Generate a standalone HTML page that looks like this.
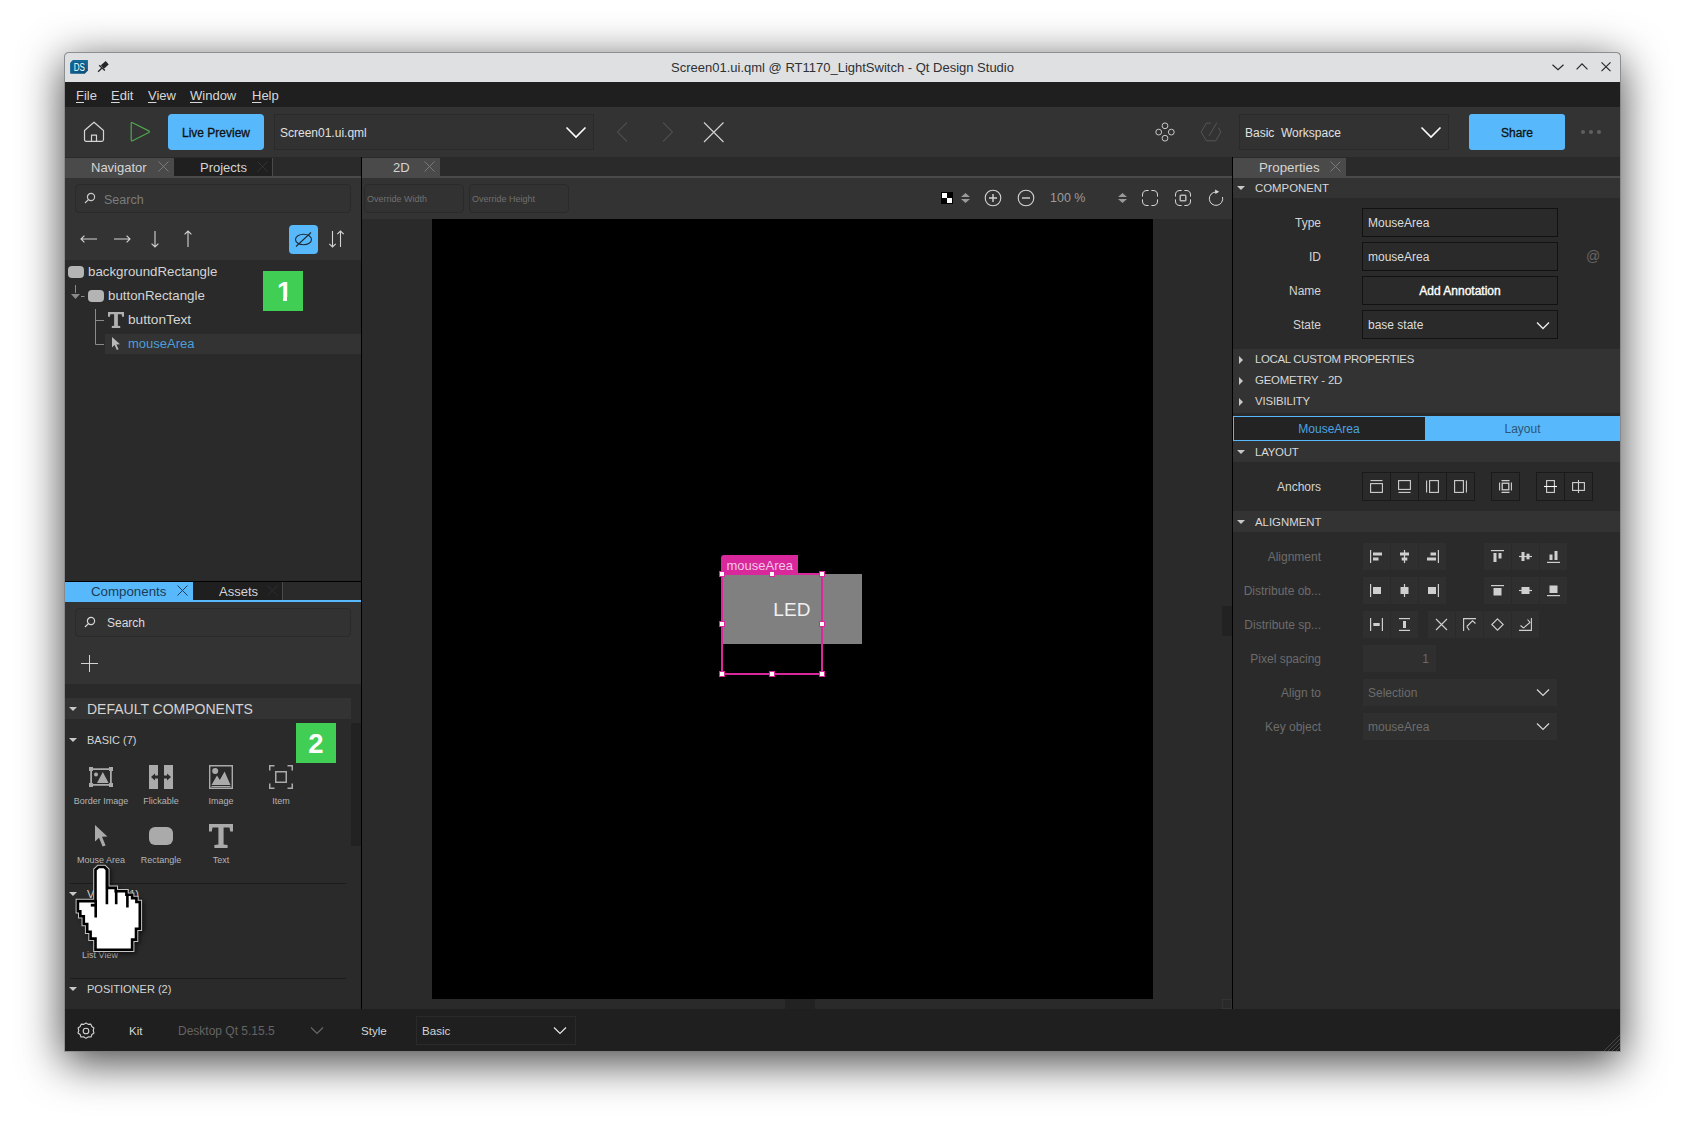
<!DOCTYPE html>
<html><head><meta charset="utf-8"><title>Qt Design Studio</title>
<style>
*{box-sizing:border-box;margin:0;padding:0}
html,body{width:1685px;height:1128px;overflow:hidden;background:#fff}
body{font-family:"Liberation Sans",sans-serif;font-size:13px;color:#d4d4d4;position:relative}
.a{position:absolute}
.t{position:absolute;white-space:pre;line-height:16px}
#win{left:65px;top:53px;width:1555px;height:998px;background:#2a2a2a;box-shadow:0 0 0 1px rgba(120,120,120,.55),0 10px 44px 2px rgba(0,0,0,.72);border-radius:4px 4px 0 0}
svg{position:absolute;overflow:visible}
.ic{fill:none;stroke:#d4d4d4;stroke-width:1.2;stroke-linecap:round;stroke-linejoin:round}
.mn{top:88px;font-size:13px;color:#d8d8d8}
.mn u{text-decoration-thickness:1px;text-underline-offset:2px}
.ri{width:16px;height:12px;border-radius:4px;background:#b4b4b4}
.tri{width:0;height:0;border-left:4px solid transparent;border-right:4px solid transparent;border-top:4px solid #c8c8c8}
.cl{width:60px;text-align:center;font-size:9px;line-height:12px;color:#b4b4b4}
.ob{height:29px;border:1px solid #2a2a2a;border-radius:4px;background:#323232}
.hd{width:6px;height:6px;background:#fff;border:1px solid #d8289c}
.trr{width:0;height:0;border-top:4px solid transparent;border-bottom:4px solid transparent;border-left:4px solid #c8c8c8}
.sh{font-size:11.4px;color:#d8d8d8}
.fb{height:29px;border:1px solid #121212;background:#2a2a2a}
.ab{height:29px;border:1px solid #1a1a1a}
.db{width:27px;height:27px;background:#2f2f2f}
</style></head><body>
<div id="win" class="a"></div>
<!-- title bar -->
<div class="a" style="left:64px;top:52px;width:1557px;height:30px;background:#dfe0e2;border-radius:5px 5px 0 0;border:1px solid #8b8f92;border-bottom:none"></div>
<div class="t" style="left:65px;width:1555px;top:60px;text-align:center;color:#2e3134;font-size:13px">Screen01.ui.qml @ RT1170_LightSwitch - Qt Design Studio</div>
<!-- menubar -->
<div class="a" style="left:65px;top:82px;width:1555px;height:25px;background:#1f1f1f"></div>
<!-- toolbar -->
<div class="a" style="left:65px;top:107px;width:1555px;height:50px;background:#333"></div>
<!-- tab strip -->
<div class="a" style="left:65px;top:157px;width:1555px;height:20px;background:#2a2a2a"></div>
<!-- status bar -->
<div class="a" style="left:65px;top:1009px;width:1555px;height:42px;background:#1f1f1f"></div>

<!-- title icons -->
<svg style="left:70px;top:60px" width="18" height="14" viewBox="0 0 18 14"><defs><linearGradient id="dsg" x1="0" y1="0" x2="1" y2="1"><stop offset="0" stop-color="#0f6494"/><stop offset=".5" stop-color="#0e5f8e"/><stop offset="1" stop-color="#084a73"/></linearGradient></defs><path d="M3 0 H17.2 Q17.9 0 17.9 .7 V10.6 L14.8 13.7 H.8 Q.1 13.7 .1 13 V2.9 Z" fill="url(#dsg)"/><path d="M3 0 H17.2 Q17.9 0 17.9 .7 V10.6 L16 8 V2 H.9 Z" fill="#1b70a0" opacity=".55"/><text x="3.7" y="10.6" font-family="Liberation Sans,sans-serif" font-size="10" fill="#fff" textLength="11.2" lengthAdjust="spacingAndGlyphs">DS</text></svg>
<svg style="left:97px;top:60px" width="13" height="13" viewBox="0 0 13 13" fill="none" stroke="#232629"><path d="M5.4 6.9 L10.2 2.8" stroke-width="4.6"/><path d="M2.2 5.3 L7.9 10.6" stroke-width="1.3"/><path d="M4.7 8.2 L1.1 11.7" stroke-width="1.3"/></svg>
<!-- window controls -->
<svg style="left:1551px;top:61px" width="62" height="12" viewBox="0 0 62 12" fill="none" stroke="#232629" stroke-width="1.15"><path d="M1.5 3.8 L7 8.8 L12.5 3.8"/><path d="M25.6 8.3 L31 2.8 L36.5 8.3"/><path d="M50.5 1.4 L59.5 10.2 M59.5 1.4 L50.5 10.2"/></svg>
<!-- menu -->
<div class="t mn" style="left:76px"><u>F</u>ile</div>
<div class="t mn" style="left:111px"><u>E</u>dit</div>
<div class="t mn" style="left:148px"><u>V</u>iew</div>
<div class="t mn" style="left:190px"><u>W</u>indow</div>
<div class="t mn" style="left:252px"><u>H</u>elp</div>
<!-- toolbar left -->
<svg style="left:83px;top:121px" width="22" height="22" viewBox="0 0 22 22" class="ic"><path d="M1.5 9.5 L11 1.2 L20.5 9.5 L20.5 18.5 Q20.5 20.3 18.7 20.3 L3.3 20.3 Q1.5 20.3 1.5 18.5 Z"/><path d="M8.5 20 L8.5 14.2 L13.5 14.2 L13.5 20"/></svg>
<svg style="left:129px;top:121px" width="22" height="22" viewBox="0 0 22 22" fill="none" stroke="#4fa64f" stroke-width="1.2" stroke-linejoin="round"><path d="M2.2 2.6 Q2.2 1 3.6 1.7 L19.8 9.9 Q21 10.7 19.8 11.5 L3.6 19.7 Q2.2 20.4 2.2 18.8 Z"/></svg>
<div class="a" style="left:168px;top:114px;width:96px;height:36px;background:#57b9fc;border-radius:4px"></div>
<div class="t" style="left:168px;width:96px;top:125px;text-align:center;color:#111;font-size:12px;-webkit-text-stroke:.3px #111">Live Preview</div>
<div class="a" style="left:274px;top:114px;width:320px;height:36px;border:1px solid #2a2a2a;background:#323232"></div>
<div class="t" style="left:280px;top:125px;font-size:12px;color:#e0e0e0">Screen01.ui.qml</div>
<svg style="left:565px;top:126px" width="22" height="13" viewBox="0 0 22 13" fill="none" stroke="#fff" stroke-width="1.6"><path d="M1.5 1.5 L11 11 L20.5 1.5"/></svg>
<svg style="left:615px;top:121px" width="112" height="22" viewBox="0 0 112 22" fill="none" stroke-width="1.1"><path d="M12 1.5 L2.5 11 L12 20.5" stroke="#4d4d4d"/><path d="M48 1.5 L57.5 11 L48 20.5" stroke="#4d4d4d"/><path d="M89 1.5 L108.5 21 M108.5 1.5 L89 21" stroke="#d4d4d4"/></svg>
<!-- toolbar right -->
<svg style="left:1155px;top:122px" width="20" height="20" viewBox="0 0 20 20" fill="none" stroke="#c8c8c8" stroke-width="1"><circle cx="10" cy="3.8" r="2.9"/><circle cx="10" cy="16.2" r="2.9"/><circle cx="3.7" cy="10.1" r="2.9"/><circle cx="16.3" cy="10.1" r="2.9"/></svg>
<svg style="left:1200px;top:122px" width="22" height="20" viewBox="0 0 22 20" fill="none" stroke="#565656" stroke-width="1" stroke-linejoin="round"><path d="M11 1.1 H6.4 L1.1 10.1 L6.4 18.8 H15.8 L20.8 10.1 L18.4 5.8"/><path d="M16.9 .6 L9 13.8"/></svg>
<div class="a" style="left:1239px;top:114px;width:210px;height:36px;border:1px solid #2a2a2a;background:#323232"></div>
<div class="t" style="left:1245px;top:124.5px;font-size:12px;color:#e0e0e0">Basic  Workspace</div>
<svg style="left:1420px;top:126px" width="22" height="13" viewBox="0 0 22 13" fill="none" stroke="#fff" stroke-width="1.6"><path d="M1.5 1.5 L11 11 L20.5 1.5"/></svg>
<div class="a" style="left:1469px;top:114px;width:96px;height:36px;background:#57b9fc;border-radius:3px"></div>
<div class="t" style="left:1469px;width:96px;top:124.5px;text-align:center;color:#111;font-size:12px;-webkit-text-stroke:.3px #111">Share</div>
<div class="a" style="left:1581px;top:130px;width:4px;height:4px;border-radius:2px;background:#606060"></div>
<div class="a" style="left:1589px;top:130px;width:4px;height:4px;border-radius:2px;background:#606060"></div>
<div class="a" style="left:1597px;top:130px;width:4px;height:4px;border-radius:2px;background:#606060"></div>

<!-- LEFT PANEL: navigator -->
<div class="a" style="left:65px;top:158px;width:109px;height:19px;background:#4a4a4a"></div>
<div class="a" style="left:174px;top:158px;width:99px;height:19px;background:#1f1f1f;border-right:1px solid #4a4a4a"></div>
<div class="a" style="left:65px;top:176px;width:296px;height:2px;background:#4a4a4a"></div>
<div class="t" style="left:91px;top:160px">Navigator</div>
<div class="t" style="left:200px;top:160px">Projects</div>
<svg style="left:158px;top:161px" width="11" height="11" viewBox="0 0 11 11" fill="none" stroke="#7a7a7a" stroke-width="1"><path d="M.5 .5 L10.5 10.5 M10.5 .5 L.5 10.5"/></svg>
<svg style="left:257px;top:161px" width="11" height="11" viewBox="0 0 11 11" fill="none" stroke="#333" stroke-width="1"><path d="M.5 .5 L10.5 10.5 M10.5 .5 L.5 10.5"/></svg>
<div class="a" style="left:65px;top:178px;width:296px;height:82px;background:#333"></div>
<div class="a" style="left:75px;top:184px;width:276px;height:28.5px;border:1px solid #2a2a2a;border-radius:4px;background:#323232"></div>
<svg style="left:84px;top:192px" width="12" height="12" viewBox="0 0 12 12" fill="none" stroke="#c8c8c8" stroke-width="1.2"><circle cx="7" cy="5" r="3.6"/><path d="M4.4 7.6 L1 11"/></svg>
<div class="t" style="left:104px;top:192px;font-size:12.5px;color:#7c7c7c">Search</div>
<svg style="left:80px;top:230px" width="110" height="18" viewBox="0 0 110 18" fill="none" stroke="#d4d4d4" stroke-width="1.1"><path d="M17 9 L1 9 M4.4 5.6 L1 9 L4.4 12.4"/><path d="M34 9 L50 9 M46.6 5.6 L50 9 L46.6 12.4"/><path d="M75 1 L75 17 M71.6 13.6 L75 17 L78.4 13.6"/><path d="M108 17 L108 1 M104.6 4.4 L108 1 L111.4 4.4"/></svg>
<div class="a" style="left:289px;top:225px;width:29px;height:29px;background:#57b9fc;border-radius:4px"></div>
<svg style="left:294px;top:230px" width="19" height="19" viewBox="0 0 19 19" fill="none" stroke="#1f2a33" stroke-width="1.1"><ellipse cx="9.5" cy="9.5" rx="8" ry="5.2"/><path d="M2 16.5 L17 2.5"/></svg>
<svg style="left:328px;top:230px" width="17" height="18" viewBox="0 0 17 18" fill="none" stroke="#d4d4d4" stroke-width="1.1"><path d="M4.5 1 L4.5 17 M1.3 13.8 L4.5 17 L7.7 13.8"/><path d="M12.5 17 L12.5 1 M9.3 4.2 L12.5 1 L15.7 4.2"/></svg>
<!-- tree -->
<div class="a" style="left:105px;top:334px;width:256px;height:20px;background:#333"></div>
<div class="a ri" style="left:68px;top:266px"></div>
<div class="a ri" style="left:88px;top:290px"></div>
<div class="t" style="left:88px;top:264px;font-size:13.3px">backgroundRectangle</div>
<div class="t" style="left:108px;top:288px;font-size:13.3px">buttonRectangle</div>
<div class="t" style="left:128px;top:312px;font-size:13.7px">buttonText</div>
<div class="t" style="left:128px;top:336px;color:#4b9fd8">mouseArea</div>
<svg style="left:70px;top:284.6px" width="40" height="68" viewBox="0 0 40 68" fill="none" stroke="#8a8a8a" stroke-width="1"><path d="M5.5 0 L5.5 8" /><path d="M1 9 L10 9 L5.5 14 Z" fill="#8a8a8a" stroke="none"/><path d="M11 11.5 L14.5 11.5"/><path d="M25.5 24 L25.5 59.5 L34 59.5 M25.5 35.5 L34 35.5"/></svg>
<svg style="left:108px;top:312px" width="16" height="16" viewBox="0 0 17 17"><path d="M0 0 H17 V5 H15 L14.5 2.5 H10.5 V14.5 L13 15 V17 H4 V15 L6.5 14.5 V2.5 H2.5 L2 5 H0 Z" fill="#b0b0b0"/></svg>
<svg style="left:111px;top:336px" width="10" height="15" viewBox="0 0 10 15"><path d="M1 1 L1 11.5 L3.6 9 L5.8 14 L7.6 13.2 L5.4 8.4 L9 8.2 Z" fill="#b8b8b8"/></svg>
<div class="a" style="left:263px;top:271px;width:40px;height:40px;background:#41ce54"></div>
<div class="t" style="left:264.5px;width:40px;top:276.1px;line-height:32px;text-align:center;font-size:27px;font-weight:700;color:#fff">1</div>
<div class="a" style="left:275px;top:297.2px;width:8px;height:6px;background:#41ce54"></div><div class="a" style="left:287.3px;top:297.2px;width:7px;height:6px;background:#41ce54"></div>
<!-- divider between nav and components -->
<div class="a" style="left:65px;top:581px;width:296px;height:1px;background:#000"></div>
<!-- components tabs -->
<div class="a" style="left:65px;top:582px;width:128px;height:18px;background:#57b9fc"></div>
<div class="a" style="left:193px;top:582px;width:90px;height:18px;background:#1f1f1f;border-right:1px solid #4a4a4a"></div>
<div class="a" style="left:65px;top:600px;width:296px;height:2px;background:#57b9fc"></div>
<div class="t" style="left:91px;top:584px;font-size:13.3px;color:#1d3b55">Components</div>
<div class="t" style="left:219px;top:584px">Assets</div>
<svg style="left:177px;top:585px" width="11" height="11" viewBox="0 0 11 11" fill="none" stroke="#1d3b55" stroke-width="1"><path d="M.5 .5 L10.5 10.5 M10.5 .5 L.5 10.5"/></svg>
<svg style="left:267px;top:585px" width="11" height="11" viewBox="0 0 11 11" fill="none" stroke="#2c2c2c" stroke-width="1"><path d="M.5 .5 L10.5 10.5 M10.5 .5 L.5 10.5"/></svg>
<div class="a" style="left:65px;top:602px;width:296px;height:82px;background:#333"></div>
<div class="a" style="left:75px;top:608px;width:276px;height:28.5px;border:1px solid #2a2a2a;border-radius:4px;background:#323232"></div>
<svg style="left:84px;top:616px" width="12" height="12" viewBox="0 0 12 12" fill="none" stroke="#d8d8d8" stroke-width="1.2"><circle cx="7" cy="5" r="3.6"/><path d="M4.4 7.6 L1 11"/></svg>
<div class="t" style="left:107px;top:615px;font-size:12px;color:#dcdcdc">Search</div>
<svg style="left:81px;top:655px" width="17" height="17" viewBox="0 0 17 17" fill="none" stroke="#d4d4d4" stroke-width="1"><path d="M8.5 0 L8.5 17 M0 8.5 L17 8.5"/></svg>
<div class="a" style="left:65px;top:698px;width:286px;height:21px;background:#333"></div>
<div class="a" style="left:351px;top:723px;width:10px;height:123px;background:#222"></div>
<div class="a tri" style="left:69px;top:706.7px"></div>
<div class="t" style="left:87px;top:700px;font-size:14px;line-height:18px">DEFAULT COMPONENTS</div>
<div class="a tri" style="left:69px;top:737.7px"></div>
<div class="t" style="left:87px;top:732px;font-size:11px">BASIC (7)</div>
<div class="a" style="left:296px;top:723px;width:40px;height:40px;background:#41ce54"></div>
<div class="t" style="left:296px;width:40px;top:727.5px;line-height:32px;text-align:center;font-size:27.5px;font-weight:700;color:#fff">2</div>

<!-- component icons row 1 -->
<svg style="left:89px;top:767px" width="24" height="20" viewBox="0 0 24 20"><g fill="#aaa"><rect x="0" y="0" width="4" height="4"/><rect x="20" y="0" width="4" height="4"/><rect x="0" y="16" width="4" height="4"/><rect x="20" y="16" width="4" height="4"/><path d="M1.2 1.2 H22.8 V18.8 H1.2 Z M3 3 V17 H21 V3 Z" fill-rule="evenodd"/><circle cx="7" cy="7.5" r="2"/><path d="M8 16 L13.8 5 L19.6 16 Z"/></g></svg>
<svg style="left:149px;top:765px" width="24" height="24" viewBox="0 0 24 24"><g fill="#aaa"><path d="M0 0 H9 V24 H0 Z M9 10.6 H6 V8.6 L2 12 L6 15.4 V13.4 H9 Z" fill-rule="evenodd"/><path d="M15 0 H24 V24 H15 Z M15 10.6 H18 V8.6 L22 12 L18 15.4 V13.4 H15 Z" fill-rule="evenodd"/></g></svg>
<svg style="left:209px;top:765px" width="24" height="24" viewBox="0 0 24 24"><g fill="#aaa"><path d="M0 0 H24 V24 H0 Z M1.4 1.4 V22.6 H22.6 V1.4 Z" fill-rule="evenodd"/><circle cx="6.2" cy="6" r="3"/><path d="M2.5 20 L8 10.5 L10.8 15 L15.6 6.5 L21.5 20 Z"/><rect x="2.5" y="21" width="19" height="1"/></g></svg>
<svg style="left:269px;top:765px" width="24" height="24" viewBox="0 0 24 24" fill="none" stroke="#aaa" stroke-width="1.5"><path d="M.75 5.5 V.75 H5.5 M18.5 .75 H23.25 V5.5 M23.25 18.5 V23.25 H18.5 M5.5 23.25 H.75 V18.5"/><rect x="6.75" y="6.75" width="10.5" height="10.5"/></svg>
<div class="t cl" style="left:71px;top:795px">Border Image</div>
<div class="t cl" style="left:131px;top:795px">Flickable</div>
<div class="t cl" style="left:191px;top:795px">Image</div>
<div class="t cl" style="left:251px;top:795px">Item</div>
<!-- row 2 -->
<svg style="left:94px;top:824px" width="14" height="24" viewBox="0 0 14 24"><path d="M1 1 L1 17.6 L5 13.8 L8.6 22.6 L11.6 21.4 L8 12.8 L13.4 12.4 Z" fill="#aaa"/></svg>
<div class="a" style="left:149px;top:827px;width:24px;height:18px;border-radius:6px;background:#aaa"></div>
<svg style="left:209px;top:824px" width="24" height="24" viewBox="0 0 24 24"><path d="M0 0 H24 V7.5 H21.2 L20.5 3.5 H14.6 V20.4 L18.6 21 V24 H5.4 V21 L9.4 20.4 V3.5 H3.5 L2.8 7.5 H0 Z" fill="#aaa"/></svg>
<div class="t cl" style="left:71px;top:854px">Mouse Area</div>
<div class="t cl" style="left:131px;top:854px">Rectangle</div>
<div class="t cl" style="left:191px;top:854px">Text</div>

<div class="a" style="left:70px;top:883px;width:276px;height:1px;background:#1c1c1c"></div>
<div class="a tri" style="left:69px;top:891.7px"></div>
<div class="t" style="left:87px;top:886px;font-size:11px">VIEWS (1)</div>
<div class="t cl" style="left:70px;top:949px">List View</div>
<div class="a" style="left:70px;top:978px;width:276px;height:1px;background:#1c1c1c"></div>
<div class="a tri" style="left:69px;top:986.7px"></div>
<div class="t" style="left:87px;top:981px;font-size:11px">POSITIONER (2)</div>
<!-- vertical divider -->
<div class="a" style="left:361px;top:157px;width:1px;height:852px;background:#000"></div>
<!-- status bar -->
<svg style="left:77px;top:1022px" width="18" height="18" viewBox="0 0 18 18" fill="none" stroke="#d4d4d4" stroke-width="1.1" stroke-linejoin="round"><circle cx="9" cy="9" r="2.8"/><path d="M9 1 L11.2 2.4 L13.8 2.1 L14.8 4.5 L16.9 6 L16.2 8.5 L17 11 L14.9 12.5 L14 15 L11.4 14.8 L9 16.4 L6.6 14.8 L4 15 L3.1 12.5 L1 11 L1.8 8.5 L1.1 6 L3.2 4.5 L4.2 2.1 L6.8 2.4 Z"/></svg>
<div class="t" style="left:129px;top:1023px;font-size:11.6px">Kit</div>
<div class="t" style="left:178px;top:1023px;font-size:12px;color:#646464">Desktop Qt 5.15.5</div>
<svg style="left:310px;top:1026px" width="14" height="9" viewBox="0 0 14 9" fill="none" stroke="#6a6a6a" stroke-width="1.1"><path d="M1 1.5 L7 7.5 L13 1.5"/></svg>
<div class="t" style="left:361px;top:1023px;font-size:11.6px">Style</div>
<div class="a" style="left:416px;top:1016px;width:160px;height:29px;border:1px solid #2a2a2a;background:#1f1f1f"></div>
<div class="t" style="left:422px;top:1023px;font-size:11.6px">Basic</div>
<svg style="left:553px;top:1026px" width="14" height="9" viewBox="0 0 14 9" fill="none" stroke="#e8e8e8" stroke-width="1.2"><path d="M1 1.5 L7 7.5 L13 1.5"/></svg>


<!-- CENTER -->
<div class="a" style="left:362px;top:158px;width:78px;height:19px;background:#4a4a4a"></div>
<div class="a" style="left:362px;top:176px;width:870px;height:2px;background:#4a4a4a"></div>
<div class="t" style="left:393px;top:160px">2D</div>
<svg style="left:424px;top:161px" width="11" height="11" viewBox="0 0 11 11" fill="none" stroke="#7a7a7a" stroke-width="1"><path d="M.5 .5 L10.5 10.5 M10.5 .5 L.5 10.5"/></svg>
<div class="a" style="left:362px;top:178px;width:870px;height:41px;background:#333"></div>
<div class="a ob" style="left:364px;top:184px;width:100px"></div>
<div class="a ob" style="left:469px;top:184px;width:100px"></div>
<div class="t" style="left:367px;top:191px;font-size:9px;color:#707070">Override Width</div>
<div class="t" style="left:472px;top:191px;font-size:9px;color:#707070">Override Height</div>
<div class="a" style="left:941px;top:192px;width:12px;height:12px;background:#000"></div>
<div class="a" style="left:942px;top:193px;width:5px;height:5px;background:#fff"></div>
<div class="a" style="left:947px;top:198px;width:5px;height:5px;background:#fff"></div>
<svg style="left:961px;top:193px" width="9" height="10" viewBox="0 0 9 10" fill="#9a9a9a"><path d="M0 4 L4.5 0 L9 4 Z M0 6 L9 6 L4.5 10 Z"/></svg>
<svg style="left:1118px;top:193px" width="9" height="10" viewBox="0 0 9 10" fill="#9a9a9a"><path d="M0 4 L4.5 0 L9 4 Z M0 6 L9 6 L4.5 10 Z"/></svg>
<svg style="left:984px;top:189px" width="18" height="18" viewBox="0 0 18 18" fill="none" stroke="#d4d4d4" stroke-width="1.1"><circle cx="9" cy="9" r="7.8"/><path d="M5 9 H13 M9 5 V13" stroke-width="1.4"/></svg>
<svg style="left:1017px;top:189px" width="18" height="18" viewBox="0 0 18 18" fill="none" stroke="#d4d4d4" stroke-width="1.1"><circle cx="9" cy="9" r="7.8"/><path d="M5 9 H13" stroke-width="1.4"/></svg>
<div class="t" style="left:1050px;top:190px;font-size:12.5px;color:#9c9c9c">100 %</div>
<svg style="left:1142px;top:190px" width="16" height="16" viewBox="0 0 16 16" fill="none" stroke="#d8d8d8" stroke-width="1"><path d="M.5 6.6 V5 Q.5 .5 5 .5 H6.6 M9.4 .5 H11 Q15.5 .5 15.5 5 V6.6 M15.5 9.4 V11 Q15.5 15.5 11 15.5 H9.4 M6.6 15.5 H5 Q.5 15.5 .5 11 V9.4"/></svg>
<svg style="left:1175px;top:190px" width="16" height="16" viewBox="0 0 16 16" fill="none" stroke="#d8d8d8" stroke-width="1"><path d="M.5 6.6 V5 Q.5 .5 5 .5 H6.6 M9.4 .5 H11 Q15.5 .5 15.5 5 V6.6 M15.5 9.4 V11 Q15.5 15.5 11 15.5 H9.4 M6.6 15.5 H5 Q.5 15.5 .5 11 V9.4"/><rect x="5.2" y="5.2" width="5.6" height="5.6" rx=".8" stroke="#b8b8b8" stroke-width="1.5"/></svg>
<svg style="left:1207px;top:188px" width="18" height="20" viewBox="0 0 18 20" fill="none" stroke="#d8d8d8" stroke-width="1"><path d="M15.5 9 A6.7 6.7 0 1 1 9 4"/><path d="M8 1.4 L12.2 3.8 L8.4 6 Z" fill="#d8d8d8" stroke="none"/></svg>
<!-- canvas -->
<div class="a" style="left:432px;top:219px;width:721px;height:780px;background:#000"></div>
<div class="a" style="left:722px;top:574px;width:140px;height:70px;background:#808080"></div>
<div class="t" style="left:722px;width:140px;top:598px;line-height:24px;text-align:center;font-size:19px;color:#f0f0f0;letter-spacing:.2px">LED</div>
<div class="a" style="left:721px;top:555px;width:77px;height:20px;background:#d8289c;border-radius:3px 0 0 0"></div>
<div class="t" style="left:726.5px;top:558px;font-size:13px;color:#f4c6e4">mouseArea</div>
<div class="a" style="left:721px;top:573px;width:102px;height:102px;border:2px solid #d8289c"></div>
<div class="a hd" style="left:719px;top:571px"></div><div class="a hd" style="left:769px;top:571px"></div><div class="a hd" style="left:819px;top:571px"></div>
<div class="a hd" style="left:719px;top:621px"></div><div class="a hd" style="left:819px;top:621px"></div>
<div class="a hd" style="left:719px;top:671px"></div><div class="a hd" style="left:769px;top:671px"></div><div class="a hd" style="left:819px;top:671px"></div>
<!-- scrollbars -->
<div class="a" style="left:1222px;top:606px;width:10px;height:30px;background:#222"></div>
<div class="a" style="left:785px;top:999px;width:30px;height:10px;background:#222"></div>
<div class="a" style="left:1222px;top:999px;width:10px;height:10px;background:#2a2a2a;border:1px solid #343434"></div>
<svg style="left:1603px;top:1034px" width="17" height="17" viewBox="0 0 17 17" fill="none" stroke="#474747" stroke-width="1"><path d="M1 17 L17 1 M5 17 L17 5 M9 17 L17 9 M13 17 L17 13"/></svg>
<!-- divider center/right -->
<div class="a" style="left:1232px;top:157px;width:1px;height:852px;background:#000"></div>

<!-- RIGHT PANEL -->
<div class="a" style="left:1233px;top:158px;width:113px;height:19px;background:#4a4a4a"></div>
<div class="a" style="left:1233px;top:176px;width:387px;height:2px;background:#4a4a4a"></div>
<div class="t" style="left:1259px;top:160px;font-size:13.3px">Properties</div>
<svg style="left:1330px;top:161px" width="11" height="11" viewBox="0 0 11 11" fill="none" stroke="#7a7a7a" stroke-width="1"><path d="M.5 .5 L10.5 10.5 M10.5 .5 L.5 10.5"/></svg>
<div class="a" style="left:1233px;top:178px;width:387px;height:20px;background:#333"></div>
<div class="a tri" style="left:1237px;top:186.0px"></div>
<div class="t sh" style="left:1255px;top:180.0px">COMPONENT</div>
<div class="a" style="left:1233px;top:349px;width:387px;height:21px;background:#333"></div>
<div class="a trr" style="left:1239px;top:355.5px"></div>
<div class="t sh" style="left:1255px;top:351px;letter-spacing:-.29px">LOCAL CUSTOM PROPERTIES</div>
<div class="a" style="left:1233px;top:370px;width:387px;height:21px;background:#333"></div>
<div class="a trr" style="left:1239px;top:376.5px"></div>
<div class="t sh" style="left:1255px;top:372px;letter-spacing:-.18px">GEOMETRY - 2D</div>
<div class="a" style="left:1233px;top:391px;width:387px;height:21.5px;background:#333"></div>
<div class="a trr" style="left:1239px;top:397.5px"></div>
<div class="t sh" style="left:1255px;top:393px;letter-spacing:-.13px">VISIBILITY</div>
<div class="a" style="left:1233px;top:441px;width:387px;height:21px;background:#333"></div>
<div class="a tri" style="left:1237px;top:449.5px"></div>
<div class="t sh" style="left:1255px;top:443.5px;letter-spacing:-.2px">LAYOUT</div>
<div class="a" style="left:1233px;top:511px;width:387px;height:21px;background:#333"></div>
<div class="a tri" style="left:1237px;top:519.5px"></div>
<div class="t sh" style="left:1255px;top:513.5px">ALIGNMENT</div>
<div class="t" style="left:1233px;width:88px;text-align:right;top:215px;font-size:12px">Type</div>
<div class="a fb" style="left:1362px;top:208px;width:196px"></div>
<div class="t" style="left:1368px;top:215px;font-size:12px;color:#dcdcdc">MouseArea</div>
<div class="t" style="left:1233px;width:88px;text-align:right;top:249px;font-size:12px">ID</div>
<div class="a fb" style="left:1362px;top:242px;width:196px"></div>
<div class="t" style="left:1368px;top:249px;font-size:12px;color:#dcdcdc">mouseArea</div>
<div class="t" style="left:1233px;width:88px;text-align:right;top:283px;font-size:12px">Name</div>
<div class="a fb" style="left:1362px;top:276px;width:196px"></div>
<div class="t" style="left:1233px;width:88px;text-align:right;top:317px;font-size:12px">State</div>
<div class="a fb" style="left:1362px;top:310px;width:196px"></div>
<div class="t" style="left:1368px;top:317px;font-size:12px;color:#dcdcdc">base state</div>
<div class="t" style="left:1362px;width:196px;text-align:center;top:283px;font-size:12px;color:#fff;-webkit-text-stroke:.35px #fff">Add Annotation</div>
<div class="t" style="left:1586px;top:248px;font-size:14px;color:#666">@</div>
<svg style="left:1536px;top:321px" width="14" height="9" viewBox="0 0 14 9" fill="none" stroke="#f0f0f0" stroke-width="1.3"><path d="M1 1.5 L7 7.5 L13 1.5"/></svg>
<div class="a" style="left:1233px;top:416px;width:192px;height:25px;background:#232323;border:1px solid #57b9fc;border-right:none"></div>
<div class="a" style="left:1425px;top:416px;width:195px;height:25px;background:#57b9fc"></div>
<div class="t" style="left:1233px;width:192px;text-align:center;top:421px;font-size:12px;color:#4ba3e0">MouseArea</div>
<div class="t" style="left:1425px;width:195px;text-align:center;top:421px;font-size:12px;color:#2d5575">Layout</div>
<div class="t" style="left:1233px;width:88px;text-align:right;top:479px;font-size:12px">Anchors</div>
<div class="a ab" style="left:1362px;top:472px;width:113px"></div>
<div class="a" style="left:1390px;top:473px;width:1px;height:27px;background:#1a1a1a"></div>
<div class="a" style="left:1418px;top:473px;width:1px;height:27px;background:#1a1a1a"></div>
<div class="a" style="left:1446px;top:473px;width:1px;height:27px;background:#1a1a1a"></div>
<div class="a ab" style="left:1491px;top:472px;width:29px"></div>
<div class="a ab" style="left:1536px;top:472px;width:57px"></div>
<div class="a" style="left:1564px;top:473px;width:1px;height:27px;background:#1a1a1a"></div>
<svg style="left:1370px;top:480px" width="13" height="13" viewBox="0 0 13 13" fill="none" stroke="#d0d0d0" stroke-width="1.1"><path d="M.5 .6 H12.5"/><rect x=".6" y="3.6" width="11.8" height="8.8"/></svg>
<svg style="left:1398px;top:480px" width="13" height="13" viewBox="0 0 13 13" fill="none" stroke="#d0d0d0" stroke-width="1.1"><path d="M.5 12.4 H12.5"/><rect x=".6" y=".6" width="11.8" height="8.8"/></svg>
<svg style="left:1426px;top:480px" width="13" height="13" viewBox="0 0 13 13" fill="none" stroke="#d0d0d0" stroke-width="1.1"><path d="M.6 .5 V12.5"/><rect x="3.6" y=".6" width="8.8" height="11.8"/></svg>
<svg style="left:1454px;top:480px" width="13" height="13" viewBox="0 0 13 13" fill="none" stroke="#d0d0d0" stroke-width="1.1"><path d="M12.4 .5 V12.5"/><rect x=".6" y=".6" width="8.8" height="11.8"/></svg>
<svg style="left:1499px;top:480px" width="13" height="13" viewBox="0 0 13 13" fill="none" stroke="#d0d0d0" stroke-width="1.1"><path d="M2.5 .6 H10.5 M2.5 12.4 H10.5 M.6 2.5 V10.5 M12.4 2.5 V10.5"/><rect x="3.2" y="3.2" width="6.6" height="6.6" stroke-width="1.3"/></svg>
<svg style="left:1544px;top:480px" width="13" height="13" viewBox="0 0 13 13" fill="none" stroke="#d0d0d0" stroke-width="1.1"><rect x="2.6" y=".6" width="7.8" height="11.8"/><path d="M0 6.5 H13" stroke="#fff"/></svg>
<svg style="left:1572px;top:480px" width="13" height="13" viewBox="0 0 13 13" fill="none" stroke="#d0d0d0" stroke-width="1.1"><rect x=".6" y="2.6" width="11.8" height="7.8"/><path d="M6.5 0 V13"/></svg>
<div class="t" style="left:1233px;width:88px;text-align:right;top:549px;font-size:12px;color:#6c6c6c">Alignment</div>
<div class="a db" style="left:1363px;top:543px"></div>
<div class="a db" style="left:1391px;top:543px"></div>
<div class="a db" style="left:1419px;top:543px"></div>
<div class="a db" style="left:1484px;top:543px"></div>
<div class="a db" style="left:1512px;top:543px"></div>
<div class="a db" style="left:1540px;top:543px"></div>
<svg style="left:1370px;top:550px" width="13" height="13" viewBox="0 0 13 13" fill="#cfcfcf" stroke="none"><rect x="0" y="0" width="1.2" height="13"/><rect x="3" y="2.5" width="9" height="3"/><rect x="3" y="7.5" width="5.5" height="3"/></svg>
<svg style="left:1398px;top:550px" width="13" height="13" viewBox="0 0 13 13" fill="#cfcfcf" stroke="none"><rect x="5.9" y="0" width="1.2" height="13"/><rect x="2" y="2.5" width="9" height="3"/><rect x="3.7" y="7.5" width="5.6" height="3"/></svg>
<svg style="left:1426px;top:550px" width="13" height="13" viewBox="0 0 13 13" fill="#cfcfcf" stroke="none"><rect x="11.8" y="0" width="1.2" height="13"/><rect x="4.5" y="2.5" width="5.5" height="3"/><rect x="1" y="7.5" width="9" height="3"/></svg>
<svg style="left:1491px;top:550px" width="13" height="13" viewBox="0 0 13 13" fill="#cfcfcf" stroke="none"><rect x="0" y="0" width="13" height="1.2"/><rect x="2.5" y="3" width="3" height="9"/><rect x="7.5" y="3" width="3" height="5.5"/></svg>
<svg style="left:1519px;top:550px" width="13" height="13" viewBox="0 0 13 13" fill="#cfcfcf" stroke="none"><rect x="0" y="5.9" width="13" height="1.2"/><rect x="2.5" y="2" width="3" height="9"/><rect x="7.5" y="3.7" width="3" height="5.6"/></svg>
<svg style="left:1547px;top:550px" width="13" height="13" viewBox="0 0 13 13" fill="#cfcfcf" stroke="none"><rect x="0" y="11.8" width="13" height="1.2"/><rect x="2.5" y="4.5" width="3" height="5.5"/><rect x="7.5" y="1" width="3" height="9"/></svg>
<div class="t" style="left:1233px;width:88px;text-align:right;top:583px;font-size:12px;color:#6c6c6c">Distribute ob...</div>
<div class="a db" style="left:1363px;top:577px"></div>
<div class="a db" style="left:1391px;top:577px"></div>
<div class="a db" style="left:1419px;top:577px"></div>
<div class="a db" style="left:1484px;top:577px"></div>
<div class="a db" style="left:1512px;top:577px"></div>
<div class="a db" style="left:1540px;top:577px"></div>
<svg style="left:1370px;top:584px" width="13" height="13" viewBox="0 0 13 13" fill="#cfcfcf" stroke="none"><rect x="0" y="0" width="1.2" height="13"/><rect x="3" y="3" width="8" height="7"/></svg>
<svg style="left:1398px;top:584px" width="13" height="13" viewBox="0 0 13 13" fill="#cfcfcf" stroke="none"><rect x="5.9" y="0" width="1.2" height="13"/><rect x="2.5" y="3" width="8" height="7"/></svg>
<svg style="left:1426px;top:584px" width="13" height="13" viewBox="0 0 13 13" fill="#cfcfcf" stroke="none"><rect x="11.8" y="0" width="1.2" height="13"/><rect x="2" y="3" width="8" height="7"/></svg>
<svg style="left:1491px;top:584px" width="13" height="13" viewBox="0 0 13 13" fill="#cfcfcf" stroke="none"><rect x="0" y="1" width="13" height="1.2"/><rect x="2.5" y="4" width="8" height="7.5"/></svg>
<svg style="left:1519px;top:584px" width="13" height="13" viewBox="0 0 13 13" fill="#cfcfcf" stroke="none"><rect x="0" y="5.9" width="13" height="1.2"/><rect x="2.5" y="3" width="8" height="7"/></svg>
<svg style="left:1547px;top:584px" width="13" height="13" viewBox="0 0 13 13" fill="#cfcfcf" stroke="none"><rect x="0" y="11" width="13" height="1.2"/><rect x="2.5" y="1.5" width="8" height="7.5"/></svg>
<div class="t" style="left:1233px;width:88px;text-align:right;top:617px;font-size:12px;color:#6c6c6c">Distribute sp...</div>
<div class="a db" style="left:1363px;top:611px"></div>
<div class="a db" style="left:1391px;top:611px"></div>
<div class="a db" style="left:1428px;top:611px"></div>
<div class="a db" style="left:1456px;top:611px"></div>
<div class="a db" style="left:1484px;top:611px"></div>
<div class="a db" style="left:1512px;top:611px"></div>
<svg style="left:1370px;top:618px" width="13" height="13" viewBox="0 0 13 13" fill="#cfcfcf" stroke="none"><rect x="0" y="0" width="1.2" height="13"/><rect x="11.8" y="0" width="1.2" height="13"/><rect x="3.3" y="5" width="6.4" height="3"/></svg>
<svg style="left:1398px;top:618px" width="13" height="13" viewBox="0 0 13 13" fill="#cfcfcf" stroke="none"><rect x="1" y="0" width="11" height="1.2"/><rect x="1" y="11.8" width="11" height="1.2"/><rect x="5" y="3" width="3" height="7"/></svg>
<svg style="left:1435px;top:618px" width="13" height="13" viewBox="0 0 13 13" fill="none" stroke="#d0d0d0" stroke-width="1.1"><path d="M1 1 L12 12 M12 1 L1 12"/></svg>
<svg style="left:1463px;top:618px" width="13" height="13" viewBox="0 0 13 13" fill="none" stroke="#d0d0d0" stroke-width="1.1"><path d="M.6 13 V.6 H13"/><path d="M12.5 5.5 L9.5 2.8 L3.8 8.5 M3.8 8.5 L6.3 12.2"/></svg>
<svg style="left:1491px;top:618px" width="13" height="13" viewBox="0 0 13 13" fill="none" stroke="#d0d0d0" stroke-width="1.1"><path d="M6.5 .8 L12.2 6.5 L6.5 12.2 L.8 6.5 Z"/></svg>
<svg style="left:1519px;top:618px" width="13" height="13" viewBox="0 0 13 13" fill="none" stroke="#d0d0d0" stroke-width="1.1"><path d="M0 12.4 H12.4 V0"/><path d="M8.5 1.5 L11 4.5 L4.5 10 M4.5 10 L1.5 7.5"/></svg>
<div class="t" style="left:1233px;width:88px;text-align:right;top:651px;font-size:12px;color:#6c6c6c">Pixel spacing</div>
<div class="a db" style="left:1363px;top:645px;width:73px"></div>
<div class="t" style="left:1363px;width:66px;text-align:right;top:651px;font-size:12px;color:#686868">1</div>
<div class="t" style="left:1233px;width:88px;text-align:right;top:685px;font-size:12px;color:#6c6c6c">Align to</div>
<div class="a db" style="left:1363px;top:679px;width:194px"></div>
<div class="t" style="left:1368px;top:685px;font-size:12px;color:#6c6c6c">Selection</div>
<svg style="left:1536px;top:688px" width="14" height="9" viewBox="0 0 14 9" fill="none" stroke="#d8d8d8" stroke-width="1.2"><path d="M1 1.5 L7 7.5 L13 1.5"/></svg>
<div class="t" style="left:1233px;width:88px;text-align:right;top:719px;font-size:12px;color:#6c6c6c">Key object</div>
<div class="a db" style="left:1363px;top:713px;width:194px"></div>
<div class="t" style="left:1368px;top:719px;font-size:12px;color:#6c6c6c">mouseArea</div>
<svg style="left:1536px;top:722px" width="14" height="9" viewBox="0 0 14 9" fill="none" stroke="#d8d8d8" stroke-width="1.2"><path d="M1 1.5 L7 7.5 L13 1.5"/></svg>

<!-- hand cursor -->
<svg style="left:70px;top:860px;filter:drop-shadow(2px 2px 2px rgba(0,0,0,.55))" width="80" height="100" viewBox="0 0 80 100" stroke-linejoin="miter">
<path d="M28.5 7.0 L34.4 7.0 L37.2 9.8 L37.2 27.9 L45.7 27.9 L45.7 31.3 L56.4 31.3 L56.4 34.7 L62.1 34.7 L62.1 38.1 L66.4 38.1 L66.4 42.0 L69.8 42.0 L69.8 68.8 L66.0 68.8 L66.0 79.6 L62.1 79.6 L62.1 89.8 L25.5 89.8 L25.5 78.6 L20.6 78.6 L20.6 71.8 L17.2 71.8 L17.2 64.0 L13.8 64.0 L13.8 56.2 L10.3 56.2 L10.3 51.3 L7.9 51.3 L7.9 41.1 L25.5 41.1 L25.5 9.8 Z" fill="#fff" stroke="#c4c4c4" stroke-width="4.6"/>
<path d="M28.5 7.0 L34.4 7.0 L37.2 9.8 L37.2 27.9 L45.7 27.9 L45.7 31.3 L56.4 31.3 L56.4 34.7 L62.1 34.7 L62.1 38.1 L66.4 38.1 L66.4 42.0 L69.8 42.0 L69.8 68.8 L66.0 68.8 L66.0 79.6 L62.1 79.6 L62.1 89.8 L25.5 89.8 L25.5 78.6 L20.6 78.6 L20.6 71.8 L17.2 71.8 L17.2 64.0 L13.8 64.0 L13.8 56.2 L10.3 56.2 L10.3 51.3 L7.9 51.3 L7.9 41.1 L25.5 41.1 L25.5 9.8 Z" fill="#fff" stroke="#000" stroke-width="2.6"/>
<path d="M36.9 10.0 L36.9 44.2 M46.2 31.0 L46.2 44.2 M57.4 34.5 L57.4 47.6 M25.7 40.0 L25.7 57.4" fill="none" stroke="#000" stroke-width="2.6"/>
<rect x="20.8" y="43.8" width="4.4" height="2.8" fill="#000"/>
</svg>

</body></html>
